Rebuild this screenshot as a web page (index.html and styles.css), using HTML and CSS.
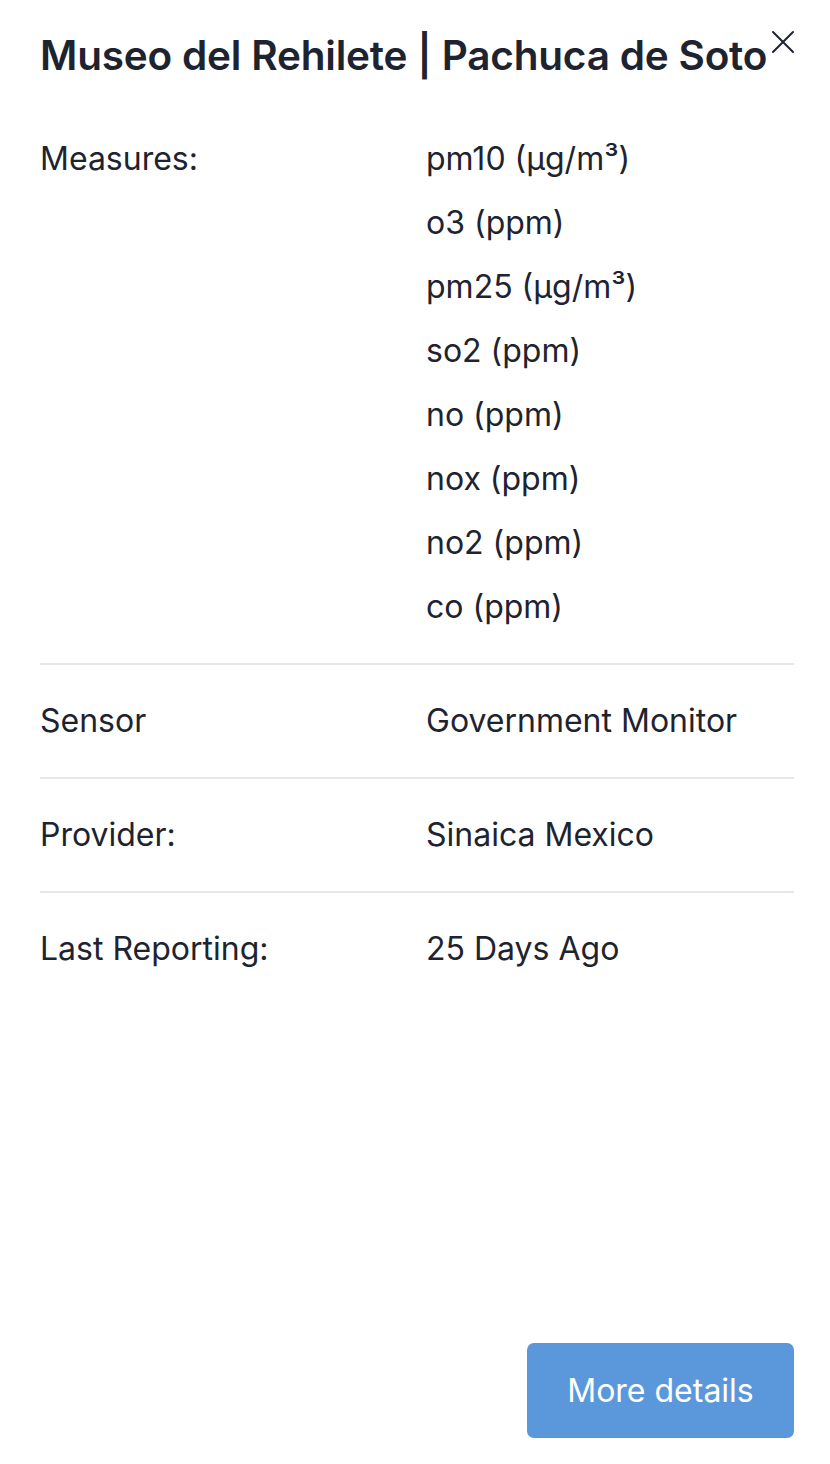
FILE: index.html
```html
<!DOCTYPE html>
<html lang="en">
<head>
<meta charset="utf-8">
<title>Museo del Rehilete | Pachuca de Soto</title>
<link rel="stylesheet" href="styles.css">
</head>
<body>
<div class="panel">
  <header class="panel-header">
    <h1 class="title">Museo del Rehilete | Pachuca de Soto</h1>
    <button class="close" aria-label="Close">
      <svg viewBox="0 0 24 24" width="24" height="24" fill="none" stroke="currentColor" stroke-width="2" stroke-linecap="round"><path d="M2 2L22 22M22 2L2 22"/></svg>
    </button>
  </header>
  <dl class="details">
    <div class="row">
      <dt class="label">Measures:</dt>
      <dd class="value">
        <ul class="measures">
          <li>pm10 (µg/m³)</li>
          <li>o3 (ppm)</li>
          <li>pm25 (µg/m³)</li>
          <li>so2 (ppm)</li>
          <li>no (ppm)</li>
          <li>nox (ppm)</li>
          <li>no2 (ppm)</li>
          <li>co (ppm)</li>
        </ul>
      </dd>
    </div>
    <div class="row">
      <dt class="label">Sensor</dt>
      <dd class="value">Government Monitor</dd>
    </div>
    <div class="row">
      <dt class="label">Provider:</dt>
      <dd class="value">Sinaica Mexico</dd>
    </div>
    <div class="row last">
      <dt class="label">Last Reporting:</dt>
      <dd class="value">25 Days Ago</dd>
    </div>
  </dl>
  <footer class="panel-footer">
    <button class="btn-primary">More details</button>
  </footer>
</div>
</body>
</html>
```
FILE: styles.css
```css
* { box-sizing: border-box; }
html, body { margin: 0; padding: 0; background: #ffffff; }
body {
  font-family: Inter, "Noto Sans", sans-serif;
  color: #1e2330;
  width: 830px;
  height: 1464px;
}
.panel {
  height: 1464px;
  padding: 24px 36px 26px 40px;
  display: flex;
  flex-direction: column;
}
.panel-header {
  display: flex;
  align-items: flex-start;
  justify-content: space-between;
}
.title {
  margin: 0;
  font-size: 40.5px;
  font-weight: 600;
  line-height: 64px;
  letter-spacing: -0.2px;
  white-space: nowrap;
}
.close {
  border: 0;
  background: none;
  padding: 0;
  margin: 2px -5px 0 0;
  color: #1e2330;
  width: 32px;
  height: 32px;
  flex-shrink: 0;
  display: flex;
  align-items: center;
  justify-content: center;
}
.details {
  margin: 15px 0 0;
}
.row {
  display: grid;
  grid-template-columns: 386px 1fr;
  padding: 24px 0 24px;
  border-bottom: 2px solid #e4e7eb;
  font-size: 32px;
  line-height: 64px;
}
.row.last { border-bottom: 0; }
.label, .value { margin: 0; }
.measures { list-style: none; margin: 0; padding: 0; }
.panel-footer {
  margin-top: auto;
  display: flex;
  justify-content: flex-end;
}
.btn-primary {
  width: 267px;
  height: 95px;
  border: 0;
  border-radius: 7px;
  background: #5b98db;
  color: #ffffff;
  font-family: Inter, "Noto Sans", sans-serif;
  font-size: 32px;
  font-weight: 400;
}
```
